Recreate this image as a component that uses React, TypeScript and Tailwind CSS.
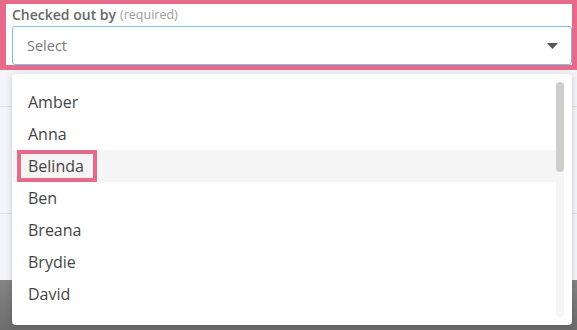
import React from "react";

const names = ["Amber", "Anna", "Belinda", "Ben", "Breana", "Brydie", "David"];

export default function App() {
  return (
    <div
      className="relative w-[577px] h-[330px] overflow-hidden bg-[#f4f5f8] flex flex-col"
      style={{ fontFamily: '"Open Sans", "Noto Sans", sans-serif' }}
    >
      {/* form header with pink highlight */}
      <div className="h-[70px] shrink-0 bg-white border-l-[6px] border-t-[4px] border-r-[5px] border-b-[5px] border-[#e76a8b] flex flex-col">
        <div className="h-[22px] pl-[6px] flex items-center leading-none">
          <span className="text-[14px] font-semibold text-[#686868]">Checked out by</span>
          <span className="text-[12.5px] text-[#9c9c9c] ml-[4px]">(required)</span>
        </div>
        <div className="ml-[6px] h-[39px] border border-[#7dbfe0] rounded-[3px] flex items-center pl-[14px] pr-[13px]">
          <span className="text-[14.5px] text-[#787878] flex-1">Select</span>
          <svg width="11" height="6" viewBox="0 0 11 6">
            <path d="M0 0 H11 L5.5 6 Z" fill="#555555" />
          </svg>
        </div>
      </div>

      {/* background page rows */}
      <div className="h-[37px] shrink-0 border-b border-[#dcdee3]" />
      <div className="h-[107px] shrink-0 border-b border-[#dcdee3]" />
      <div className="flex-1" />
      <div className="h-[50px] shrink-0 bg-gradient-to-b from-[#858585] to-[#6c6c6c]" />

      {/* dropdown menu overlay */}
      <div className="absolute left-[12px] top-[74px] w-[560px] h-[251px] bg-white rounded-[4px] shadow-[0_1px_6px_rgba(0,0,0,0.18)] flex">
        <div className="flex-1 pt-[12px] flex flex-col">
          {names.map((n) => (
            <div
              key={n}
              className={
                "relative h-[32px] shrink-0 flex items-center pl-[16px] text-[16px] text-[#444444] " +
                (n === "Belinda" ? "bg-[#f5f5f5]" : "")
              }
            >
              {n}
              {n === "Belinda" && (
                <div className="absolute left-[5px] top-0 w-[80px] h-[32px] border-[4px] border-[#e76a8b]" />
              )}
            </div>
          ))}
        </div>
        <div className="w-[8px] mt-[8px] mb-[8px] mr-[8px] bg-[#f5f5f5] rounded-[4px] flex flex-col">
          <div className="h-[90px] bg-[#cdcdcd] rounded-[4px]" />
        </div>
      </div>
    </div>
  );
}
